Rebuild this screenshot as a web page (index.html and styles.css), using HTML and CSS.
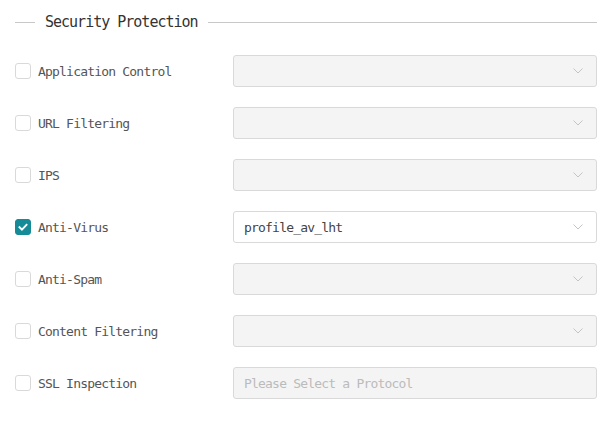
FILE: index.html
```html
<!DOCTYPE html>
<html>
<head>
<meta charset="utf-8">
<link rel="stylesheet" href="styles.css">
</head>
<body>
<div class="panel">
  <div class="legend">
    <span class="legend-line short"></span>
    <span class="legend-text">Security Protection</span>
    <span class="legend-line long"></span>
  </div>
  <div class="rows">
    <div class="row">
      <label class="label"><span class="cb"></span><span>Application Control</span></label>
      <div class="select disabled"><span class="value"></span><svg class="chev" viewBox="0 0 10 6"><path d="M0.5 0.5l4.5 4.5 4.5-4.5" fill="none" stroke="currentColor" stroke-width="1"/></svg></div>
    </div>
    <div class="row">
      <label class="label"><span class="cb"></span><span>URL Filtering</span></label>
      <div class="select disabled"><span class="value"></span><svg class="chev" viewBox="0 0 10 6"><path d="M0.5 0.5l4.5 4.5 4.5-4.5" fill="none" stroke="currentColor" stroke-width="1"/></svg></div>
    </div>
    <div class="row">
      <label class="label"><span class="cb"></span><span>IPS</span></label>
      <div class="select disabled"><span class="value"></span><svg class="chev" viewBox="0 0 10 6"><path d="M0.5 0.5l4.5 4.5 4.5-4.5" fill="none" stroke="currentColor" stroke-width="1"/></svg></div>
    </div>
    <div class="row">
      <label class="label"><span class="cb checked"><svg viewBox="0 0 16 16"><path d="M4 8.2l2.8 2.8L12 5.6" fill="none" stroke="#fff" stroke-width="2.2" stroke-linecap="square"/></svg></span><span>Anti-Virus</span></label>
      <div class="select"><span class="value">profile_av_lht</span><svg class="chev" viewBox="0 0 10 6"><path d="M0.5 0.5l4.5 4.5 4.5-4.5" fill="none" stroke="currentColor" stroke-width="1"/></svg></div>
    </div>
    <div class="row">
      <label class="label"><span class="cb"></span><span>Anti-Spam</span></label>
      <div class="select disabled"><span class="value"></span><svg class="chev" viewBox="0 0 10 6"><path d="M0.5 0.5l4.5 4.5 4.5-4.5" fill="none" stroke="currentColor" stroke-width="1"/></svg></div>
    </div>
    <div class="row">
      <label class="label"><span class="cb"></span><span>Content Filtering</span></label>
      <div class="select disabled"><span class="value"></span><svg class="chev" viewBox="0 0 10 6"><path d="M0.5 0.5l4.5 4.5 4.5-4.5" fill="none" stroke="currentColor" stroke-width="1"/></svg></div>
    </div>
    <div class="row">
      <label class="label"><span class="cb"></span><span>SSL Inspection</span></label>
      <div class="select disabled"><span class="value placeholder">Please Select a Protocol</span></div>
    </div>
  </div>
</div>
</body>
</html>
```
FILE: styles.css
```css
html, body {
  margin: 0;
  padding: 0;
  background: #fff;
}
body {
  font-family: "DejaVu Sans Mono", "Liberation Mono", monospace;
  color: #555;
}
.panel {
  padding: 11px 13px 0 15px;
}
.legend {
  display: flex;
  align-items: center;
  height: 22px;
}
.legend-line {
  height: 1px;
  background: #c8c8c8;
}
.legend-line.short {
  width: 20px;
}
.legend-line.long {
  flex: 1;
}
.legend-text {
  font-size: 15px;
  letter-spacing: -1px;
  color: #333;
  padding: 0 10px;
  line-height: 22px;
}
.rows {
  display: flex;
  flex-direction: column;
  gap: 20px;
  margin-top: 22px;
}
.row {
  display: flex;
  align-items: center;
  height: 32px;
}
.label {
  width: 218px;
  flex: none;
  display: flex;
  align-items: center;
  gap: 7px;
  font-size: 13px;
  letter-spacing: -0.8px;
  color: #555;
}
.cb {
  width: 14px;
  height: 14px;
  border: 1px solid #d9d9d9;
  border-radius: 3px;
  background: #fff;
  flex: none;
  display: flex;
}
.cb.checked {
  background: #148b97;
  border-color: #148b97;
}
.cb svg {
  width: 14px;
  height: 14px;
}
.select {
  flex: 1;
  height: 32px;
  border: 1px solid #d9d9d9;
  border-radius: 3px;
  background: #fff;
  display: flex;
  align-items: center;
  padding: 0 13px 0 10px;
  box-sizing: border-box;
}
.select.disabled {
  background: #f4f4f4;
}
.value {
  flex: 1;
  font-size: 13px;
  letter-spacing: -0.8px;
  color: #444;
}
.value.placeholder {
  color: #bbb;
}
.chev {
  width: 10px;
  height: 6px;
  color: #c4c4c4;
}
```
